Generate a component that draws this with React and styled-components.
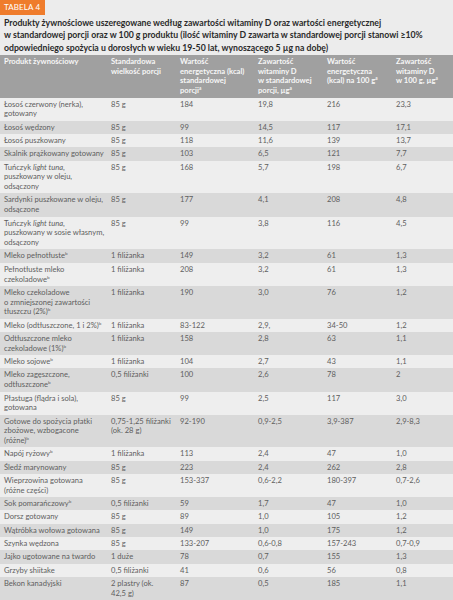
import React from 'react';
import styled, { createGlobalStyle } from 'styled-components';

const GlobalStyle = createGlobalStyle`
  html, body {
    margin: 0;
    padding: 0;
    background: #ececec;
  }
`;

const Page = styled.div`
  width: 453px;
  height: 600px;
  overflow: hidden;
  background: #ececec;
  font-family: Lato, 'Open Sans', sans-serif;
  color: #5e5e5e;
`;

const Badge = styled.div`
  width: fit-content;
  height: 15px;
  padding: 0 5px 0 4px;
  background: #ef7c2c;
  color: #fff;
  font-size: 8px;
  line-height: 15px;
  letter-spacing: 0.1px;
`;

const Title = styled.h1`
  margin: 2px 0 0;
  padding: 0 4px 1px;
  color: #2a2a2a;
  font-size: 8.7px;
  font-weight: 700;
  line-height: 12.3px;
`;

const Table = styled.table`
  width: 453px;
  border-collapse: collapse;
  table-layout: fixed;
  font-size: 7.6px;
`;

const Col = styled.col`
  width: ${({ $w }) => $w}px;
`;

const HeadRow = styled.tr`
  background: #a0a0a0;
`;

const HeadCell = styled.th`
  padding: 2px 0 1.5px 4px;
  color: #f7f7f7;
  font-weight: 700;
  text-align: left;
  vertical-align: top;
  line-height: 9.8px;
  white-space: pre-line;
`;

const Row = styled.tr`
  background: ${({ $dark }) => ($dark ? '#d9d9d9' : '#eeeeee')};
`;

const Cell = styled.td`
  padding: 2px 0 1.5px 4px;
  vertical-align: top;
  line-height: 9.8px;
  white-space: pre-line;
`;

const Sup = styled.sup`
  font-size: 4.6px;
  line-height: 0;
  vertical-align: 3px;
`;

const b = <Sup>b</Sup>;
const a = <Sup>a</Sup>;

const cols = [107, 69, 78, 69, 69, 61];

const head = [
  'Produkt żywnościowy',
  'Standardowa\nwielkość porcji',
  <>Wartość{'\n'}energetyczna (kcal){'\n'}standardowej{'\n'}porcji{a}</>,
  <>Zawartość{'\n'}witaminy D{'\n'}w standardowej{'\n'}porcji, µg{a}</>,
  <>Wartość{'\n'}energetyczna{'\n'}(kcal) na 100 g{a}</>,
  <>Zawartość{'\n'}witaminy D{'\n'}w 100 g, µg{a}</>,
];

const rows = [
  ['Łosoś czerwony (nerka),\ngotowany', '85 g', '184', '19,8', '216', '23,3'],
  ['Łosoś wędzony', '85 g', '99', '14,5', '117', '17,1'],
  ['Łosoś puszkowany', '85 g', '118', '11,6', '139', '13,7'],
  ['Skalnik prążkowany gotowany', '85 g', '103', '6,5', '121', '7,7'],
  [<>Tuńczyk <i>light tuna</i>,{'\n'}puszkowany w oleju,{'\n'}odsączony</>, '85 g', '168', '5,7', '198', '6,7'],
  ['Sardynki puszkowane w oleju,\nodsączone', '85 g', '177', '4,1', '208', '4,8'],
  [<>Tuńczyk <i>light tuna</i>,{'\n'}puszkowany w sosie własnym,{'\n'}odsączony</>, '85 g', '99', '3,8', '116', '4,5'],
  [<>Mleko pełnotłuste{b}</>, '1 filiżanka', '149', '3,2', '61', '1,3'],
  [<>Pełnotłuste mleko{'\n'}czekoladowe{b}</>, '1 filiżanka', '208', '3,2', '61', '1,3'],
  [<>Mleko czekoladowe{'\n'}o zmniejszonej zawartości{'\n'}tłuszczu (2%){b}</>, '1 filiżanka', '190', '3,0', '76', '1,2'],
  [<>Mleko (odtłuszczone, 1 i 2%){b}</>, '1 filiżanka', '83-122', '2,9,', ' 34-50', '1,2'],
  [<>Odtłuszczone mleko{'\n'}czekoladowe (1%){b}</>, '1 filiżanka', '158', '2,8', '63', '1,1'],
  [<>Mleko sojowe{b}</>, '1 filiżanka', '104', '2,7', '43', '1,1'],
  [<>Mleko zagęszczone,{'\n'}odtłuszczone{b}</>, '0,5 filiżanki', '100', '2,6', '78', '2'],
  ['Płastuga (flądra i sola),\ngotowana', '85 g', '99', '2,5', '117', '3,0'],
  [<>Gotowe do spożycia płatki{'\n'}zbożowe, wzbogacone{'\n'}(różne){b}</>, '0,75-1,25 filiżanki\n(ok. 28 g)', '92-190', '0,9-2,5', '3,9-387', '2,9-8,3'],
  [<>Napój ryżowy{b}</>, '1 filiżanka', '113', '2,4', '47', '1,0'],
  ['Śledź marynowany', '85 g', '223', '2,4', '262', '2,8'],
  ['Wieprzowina gotowana\n(różne części)', '85 g', '153-337', '0,6-2,2', '180-397', '0,7-2,6'],
  [<>Sok pomarańczowy{b}</>, '0,5 filiżanki', '59', '1,7', '47', '1,0'],
  ['Dorsz gotowany', '85 g', '89', '1,0', '105', '1,2'],
  ['Wątróbka wołowa gotowana', '85 g', '149', '1,0', '175', '1,2'],
  ['Szynka wędzona', '85 g', '133-207', '0,6-0,8', '157-243', '0,7-0,9'],
  ['Jajko ugotowane na twardo', '1 duże', '78', '0,7', '155', '1,3'],
  ['Grzyby shiitake', '0,5 filiżanki', '41', '0,6', '56', '0,8'],
  ['Bekon kanadyjski', '2 plastry (ok.\n42,5 g)', '87', '0,5', '185', '1,1'],
];

const App = () => (
  <Page>
    <GlobalStyle />
    <Badge>TABELA 4</Badge>
    <Title>
      Produkty żywnościowe uszeregowane według zawartości witaminy D oraz wartości energetycznej
      <br />
      w standardowej porcji oraz w 100 g produktu (ilość witaminy D zawarta w standardowej porcji stanowi ≥10%
      <br />
      odpowiedniego spożycia u dorosłych w wieku 19-50 lat, wynoszącego 5 µg na dobę)
    </Title>
    <Table>
      <colgroup>
        {cols.map((w, i) => (
          <Col key={i} $w={w} />
        ))}
      </colgroup>
      <thead>
        <HeadRow>
          {head.map((h, i) => (
            <HeadCell key={i}>{h}</HeadCell>
          ))}
        </HeadRow>
      </thead>
      <tbody>
        {rows.map((r, i) => (
          <Row key={i} $dark={i % 2 === 1}>
            {r.map((c, j) => (
              <Cell key={j}>{c}</Cell>
            ))}
          </Row>
        ))}
      </tbody>
    </Table>
  </Page>
);

export default App;
